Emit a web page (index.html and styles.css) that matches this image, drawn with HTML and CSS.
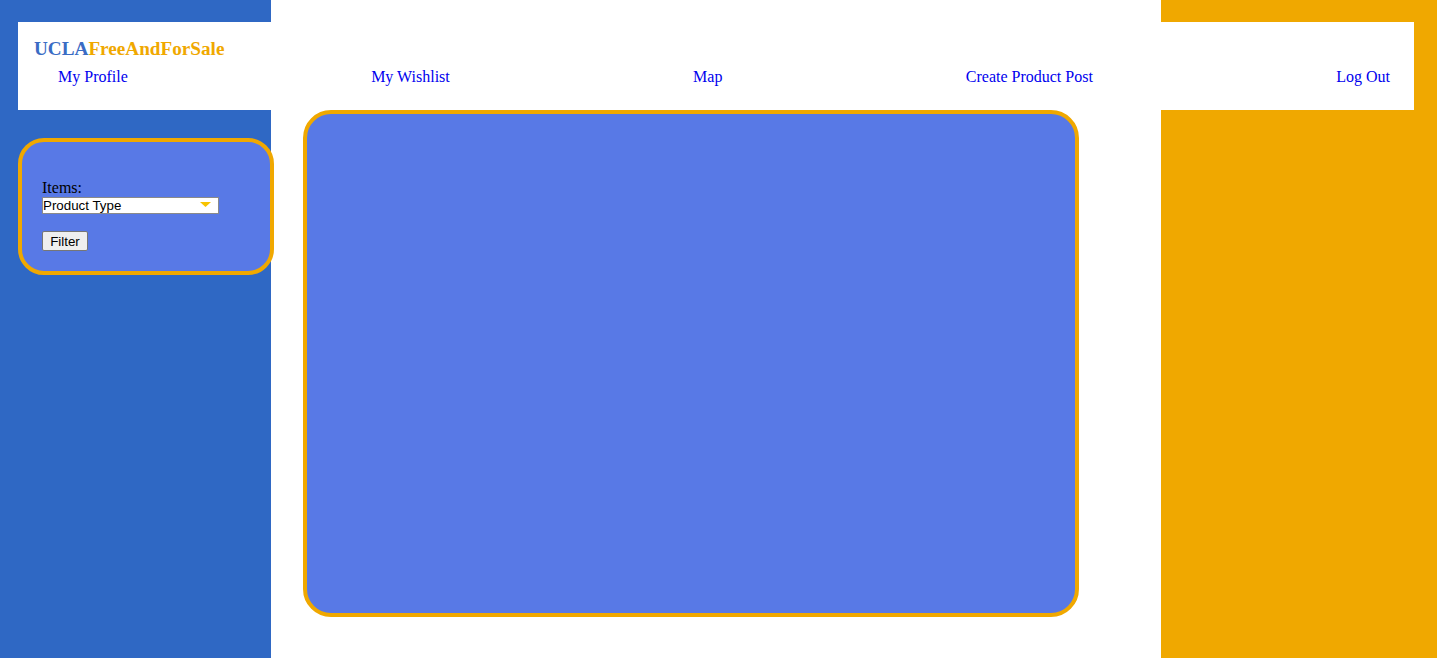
FILE: index.html
```html
<!DOCTYPE html>
<html lang="en">
<head>
<meta charset="utf-8">
<title>UCLAFreeAndForSale</title>
<link rel="stylesheet" href="styles.css">
</head>
<body>
<div class="page">
  <header class="header">
    <h3 class="brand"><span class="brand-ucla">UCLA</span><span class="brand-rest">FreeAndForSale</span></h3>
    <nav class="nav">
      <a href="#" class="nav-link">My Profile</a>
      <a href="#" class="nav-link">My Wishlist</a>
      <a href="#" class="nav-link">Map</a>
      <a href="#" class="nav-link">Create Product Post</a>
      <a href="#" class="nav-link">Log Out</a>
    </nav>
  </header>
  <div class="content">
    <aside class="sidebar">
      <form class="filter-form">
        <label class="filter-label" for="ptype">Items:</label>
        <div class="select-wrap">
          <select id="ptype" class="filter-select">
            <option>Product Type</option>
          </select>
          <svg class="select-arrow" width="11" height="5" viewBox="0 0 11 5"><polygon points="0,0 11,0 5.5,5" fill="#f7c300"/></svg>
        </div>
        <button type="button" class="filter-btn">Filter</button>
      </form>
    </aside>
    <main class="board"></main>
  </div>
</div>
</body>
</html>
```

FILE: styles.css
```css
html, body {
  margin: 0;
  padding: 0;
  height: 100%;
}
body {
  font-family: "Liberation Serif", "Times New Roman", serif;
  background: linear-gradient(to right, #2f68c4 0, #2f68c4 271px, #ffffff 271px, #ffffff 1161px, #f0a800 1161px, #f0a800 100%);
  min-height: 658px;
}
.page {
  padding: 22px 23px 0 18px;
}
.header {
  background: #ffffff;
  padding: 16px 24px 24px 16px;
  height: 88px;
  box-sizing: border-box;
}
.brand {
  margin: 0;
  font-size: 19.2px;
  font-weight: bold;
  line-height: 21.5px;
}
.brand-ucla { color: #3a6cc4; }
.brand-rest { color: #f0a800; }
.nav {
  display: flex;
  justify-content: space-between;
  padding-left: 24px;
  margin-top: 8px;
  font-size: 16px;
  line-height: 18px;
}
.nav-link {
  color: #0000ee;
  text-decoration: none;
}
.content {
  display: flex;
  align-items: flex-start;
}
.sidebar {
  margin-top: 28px;
  width: 256px;
  box-sizing: border-box;
  border: 4px solid #f0a800;
  border-radius: 26px;
  background: #5879e6;
  padding: 37px 20px 20px 20px;
}
.filter-form {
  display: flex;
  flex-direction: column;
  align-items: flex-start;
}
.filter-label {
  font-size: 16px;
  line-height: 18px;
  color: #000;
}
.select-wrap {
  position: relative;
}
.filter-select {
  appearance: none;
  -webkit-appearance: none;
  display: block;
  width: 177px;
  height: 17px;
  box-sizing: border-box;
  border: 1px solid #8a8a8a;
  border-radius: 0;
  background: #ffffff;
  font-family: "Liberation Sans", Arial, sans-serif;
  font-size: 13.33px;
  line-height: 15px;
  padding: 0;
  margin: 0;
  color: #000;
}
.select-arrow {
  position: absolute;
  left: 158px;
  top: 5px;
}
.filter-btn {
  margin-top: 17px;
  width: 46px;
  height: 20px;
  box-sizing: border-box;
  padding: 0;
  font-family: "Liberation Sans", Arial, sans-serif;
  font-size: 13.33px;
  color: #000;
  background: #efefef;
  border: 1px solid #767676;
  border-radius: 2px;
}
.board {
  margin-left: 29px;
  width: 776px;
  height: 507px;
  box-sizing: border-box;
  border: 4px solid #f0a800;
  border-radius: 28px;
  background: #5879e6;
}
```
